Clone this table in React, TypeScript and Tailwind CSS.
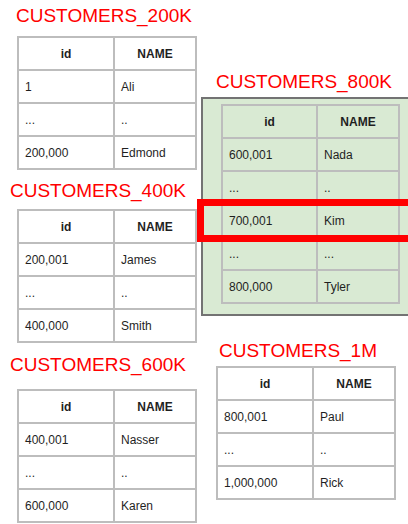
type Row = [string, string]

function ShardTable({ rows, col1, col2 }: { rows: Row[]; col1: string; col2: string }) {
  return (
    <table className="table-fixed border-collapse text-[12px] text-[#1f1f1f]">
      <colgroup>
        <col className={col1} />
        <col className={col2} />
      </colgroup>
      <thead>
        <tr className="h-[33px]">
          <th className="border-2 border-[#bdbdbd] font-bold text-center">id</th>
          <th className="border-2 border-[#bdbdbd] font-bold text-center">NAME</th>
        </tr>
      </thead>
      <tbody>
        {rows.map((r, i) => (
          <tr key={i} className="h-[33px]">
            <td className="border-2 border-[#bdbdbd] pl-[6px]">{r[0]}</td>
            <td className="border-2 border-[#bdbdbd] pl-[6px]">{r[1]}</td>
          </tr>
        ))}
      </tbody>
    </table>
  )
}

function Title({ children }: { children: string }) {
  return <div className="text-[19px] leading-none text-[#ff0000] whitespace-nowrap">{children}</div>
}

export default function App() {
  return (
    <div
      className="relative flex w-[408px] h-[524px] overflow-hidden bg-white"
      style={{ fontFamily: '"Liberation Sans", Arial, sans-serif' }}
    >
      {/* left column */}
      <div className="flex flex-col w-[201px] shrink-0 pl-[10px] pt-[6px]">
        <div className="pl-[6px]">
          <Title>CUSTOMERS_200K</Title>
        </div>
        <div className="mt-[11px] ml-[7px]">
          <ShardTable
            col1="w-[96px]"
            col2="w-[82px]"
            rows={[
              ["1", "Ali"],
              ["...", ".."],
              ["200,000", "Edmond"],
            ]}
          />
        </div>

        <div className="mt-[11px]">
          <Title>CUSTOMERS_400K</Title>
        </div>
        <div className="mt-[9px] ml-[7px]">
          <ShardTable
            col1="w-[96px]"
            col2="w-[82px]"
            rows={[
              ["200,001", "James"],
              ["...", ".."],
              ["400,000", "Smith"],
            ]}
          />
        </div>

        <div className="mt-[12px]">
          <Title>CUSTOMERS_600K</Title>
        </div>
        <div className="mt-[15px] ml-[7px]">
          <ShardTable
            col1="w-[96px]"
            col2="w-[82px]"
            rows={[
              ["400,001", "Nasser"],
              ["...", ".."],
              ["600,000", "Karen"],
            ]}
          />
        </div>
      </div>

      {/* right column */}
      <div className="flex flex-col w-[220px] shrink-0 pt-[72px]">
        <div className="pl-[15px]">
          <Title>CUSTOMERS_800K</Title>
        </div>
        <div className="mt-[6px] h-[219px] bg-[#d9ead3] border-2 border-r-0 border-[#737373] pt-[5px] pl-[18px]">
          <ShardTable
            col1="w-[95px]"
            col2="w-[82px]"
            rows={[
              ["600,001", "Nada"],
              ["...", ".."],
              ["700,001", "Kim"],
              ["...", "..."],
              ["800,000", "Tyler"],
            ]}
          />
        </div>

        <div className="mt-[25px] pl-[18px]">
          <Title>CUSTOMERS_1M</Title>
        </div>
        <div className="mt-[6px] ml-[15px]">
          <ShardTable
            col1="w-[96px]"
            col2="w-[82px]"
            rows={[
              ["800,001", "Paul"],
              ["...", ".."],
              ["1,000,000", "Rick"],
            ]}
          />
        </div>
      </div>

      {/* highlight over the Kim row */}
      <div className="absolute left-[197px] top-[199px] w-[218px] h-[43px] border-[7px] border-[#ff0000]" />
    </div>
  )
}
